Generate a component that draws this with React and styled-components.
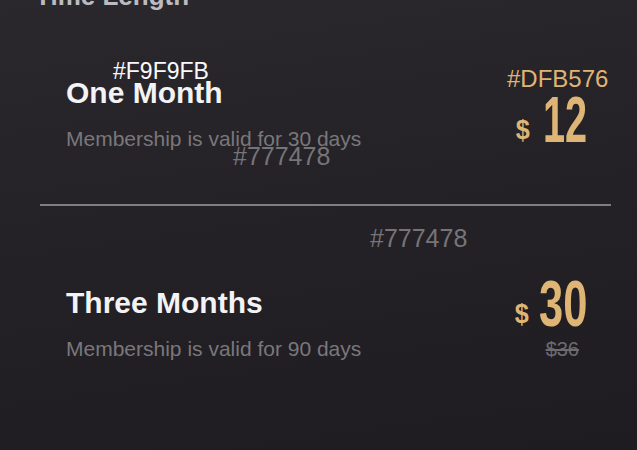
import styled, { createGlobalStyle } from "styled-components";

const GlobalStyle = createGlobalStyle`
  html, body {
    margin: 0;
    padding: 0;
    background: #232126;
  }
  * {
    box-sizing: border-box;
  }
`;

const plans = [
  {
    title: "One Month",
    desc: "Membership is valid for 30 days",
    price: 12,
    offset: 12,
  },
  {
    title: "Three Months",
    desc: "Membership is valid for 90 days",
    price: 30,
    oldPrice: "$36",
    offset: -14,
  },
];

export default function App() {
  return (
    <Page>
      <GlobalStyle />
      <Header>Time Length</Header>

      <PlanRow $gapTop={67} $gapBottom={52}>
        <PlanInfo>
          <PlanTitle>{plans[0].title}</PlanTitle>
          <PlanDesc>{plans[0].desc}</PlanDesc>
        </PlanInfo>
        <PriceBox $offset={plans[0].offset}>
          <PriceLine>
            <Currency>$</Currency>
            <Amount>{plans[0].price}</Amount>
          </PriceLine>
        </PriceBox>
      </PlanRow>

      <Divider />

      <PlanRow $gapTop={80} $gapBottom={0}>
        <PlanInfo>
          <PlanTitle>{plans[1].title}</PlanTitle>
          <PlanDesc>{plans[1].desc}</PlanDesc>
        </PlanInfo>
        <PriceBox $offset={plans[1].offset}>
          <PriceLine>
            <Currency>$</Currency>
            <Amount $wide>{plans[1].price}</Amount>
          </PriceLine>
          <OldPrice>{plans[1].oldPrice}</OldPrice>
        </PriceBox>
      </PlanRow>

      {/* design spec labels */}
      <SpecLabel $x={113} $y={60} $size={23} $color="#F9F9FB">
        #F9F9FB
      </SpecLabel>
      <SpecLabel $x={507} $y={67} $size={24} $color="#DFB576">
        #DFB576
      </SpecLabel>
      <SpecLabel $x={233} $y={144} $size={25} $color="#777478">
        #777478
      </SpecLabel>
      <SpecLabel $x={370} $y={226} $size={25} $color="#777478">
        #777478
      </SpecLabel>
    </Page>
  );
}

const Page = styled.div`
  position: relative;
  width: 637px;
  height: 450px;
  overflow: hidden;
  padding: 0 26px 0 40px;
  background: linear-gradient(172deg, #2a282d 0%, #242227 45%, #1e1c21 100%);
  font-family: "Liberation Sans", Arial, sans-serif;
`;

const Header = styled.div`
  margin-top: -17px;
  margin-left: -5px;
  font-size: 26px;
  line-height: 26px;
  font-weight: bold;
  color: #bcbbbf;
`;

const PlanRow = styled.div`
  display: flex;
  justify-content: space-between;
  align-items: flex-start;
  padding: 0 24px 0 26px;
  margin-top: ${(p) => p.$gapTop}px;
  margin-bottom: ${(p) => p.$gapBottom}px;
`;

const PlanInfo = styled.div`
  display: flex;
  flex-direction: column;
  gap: 17px;
`;

const PlanTitle = styled.div`
  font-size: 30px;
  line-height: 34px;
  font-weight: bold;
  color: #f3f3f5;
`;

const PlanDesc = styled.div`
  font-size: 21px;
  line-height: 24px;
  color: #7a777b;
`;

const PriceBox = styled.div`
  display: flex;
  flex-direction: column;
  align-items: flex-end;
  margin-top: ${(p) => p.$offset}px;
  gap: 2px;
`;

const PriceLine = styled.div`
  display: flex;
  align-items: baseline;
  gap: ${(p) => (p.$tight ? 9 : 12)}px;
  color: #dfb576;
  font-weight: bold;
  height: 64px;
  line-height: 64px;
`;

const Currency = styled.span`
  display: inline-block;
  font-size: 28px;
  transform: translateY(-3px) scaleX(0.9);
`;

const Amount = styled.span`
  display: inline-block;
  font-size: 64px;
  width: ${(p) => (p.$wide ? 48 : 44)}px;
  margin-left: ${(p) => (p.$wide ? -3 : 0)}px;
  transform: scaleX(${(p) => (p.$wide ? 0.68 : 0.62)});
  transform-origin: left center;
  white-space: nowrap;
`;

const OldPrice = styled.div`
  margin-right: 8px;
  font-size: 20px;
  line-height: 22px;
  color: #6e6b70;
  text-decoration: line-through;
`;

const Divider = styled.div`
  height: 2px;
  background: #807e83;
`;

const SpecLabel = styled.div`
  position: absolute;
  left: ${(p) => p.$x}px;
  top: ${(p) => p.$y}px;
  font-size: ${(p) => p.$size}px;
  line-height: ${(p) => p.$size}px;
  color: ${(p) => p.$color};
  white-space: nowrap;
`;
